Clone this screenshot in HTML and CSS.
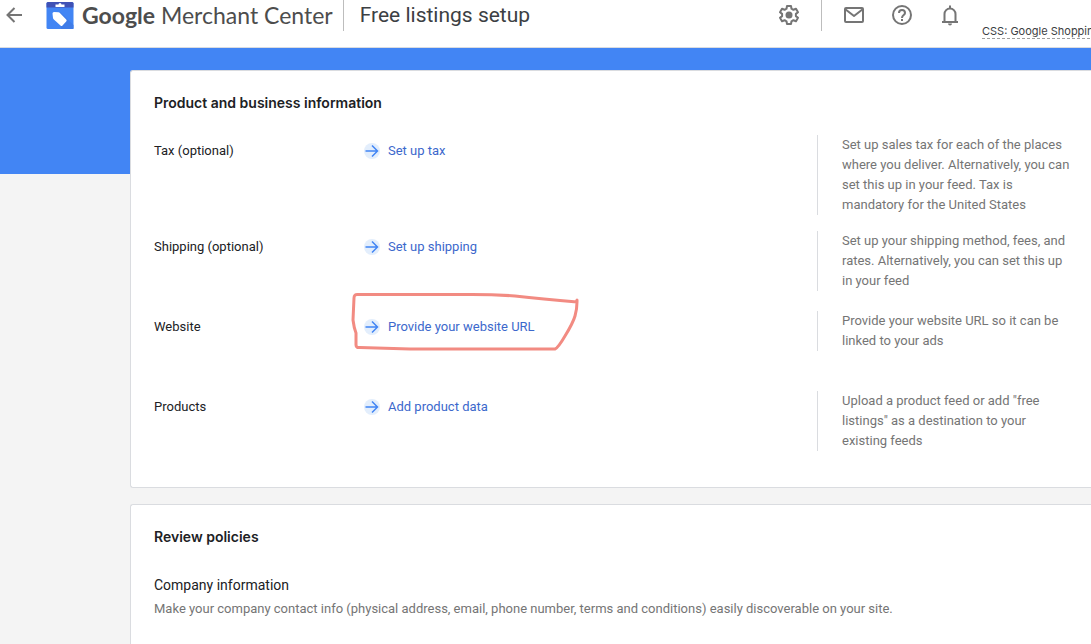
FILE: index.html
```html
<!DOCTYPE html>
<html lang="en">
<head>
  <meta charset="UTF-8" />
  <meta name="viewport" content="width=device-width, initial-scale=1.0" />
  <title>Free listings setup - Google Merchant Center</title>
  <link rel="stylesheet" href="styles.css">
</head>
<body>
  <header class="topbar">
    <button class="icon-btn back" type="button" aria-label="Back">
      <svg width="16" height="16" viewBox="0 0 16 16" fill="none" stroke="#757575" stroke-width="2"><path d="M16 8H2M8.500 1L1.500 8l7 7" /></svg>
    </button>
    <a class="brand" href="#">
      <svg width="28" height="28" viewBox="0 0 28 28">
        <rect x="0.500" y="1" width="27" height="27" rx="1.500" fill="#4285f4" />
        <path d="M14 11l13.500 13V28H15z" fill="#3f7ce8" />
        <path d="M0.500 6.500V2.500Q0.500 1 2 1h24q1.500 0 1.500 1.500v4z" fill="#3f51b5" />
        <path d="M9.500 3.500h3q0-1.500 1.500-1.500t1.500 1.500h3V6h-9z" fill="#fff" />
        <path d="M6.500 12.500q0-1.500 1.500-1.500l4.500.3q.800 0 1.400.700l6.300 6.500q1 1 0 2l-3.700 3.900q-1 1-2 0L7.600 18.200Q7 17.600 7 17z" fill="#fff" />
      </svg>
      <span class="brand-name"><b>Google</b> Merchant Center</span>
    </a>
    <h1 class="page-title">Free listings setup</h1>
    <div class="tools">
      <button class="icon-btn" type="button" aria-label="Settings">
        <svg width="24" height="24" viewBox="0 0 24 24" fill="none" stroke="#757575" stroke-width="2" stroke-linejoin="round">
          <path d="M10 3h4l.5 2.700 1.900 1.100 2.600-1 2 3.400-2.100 1.700v2.200l2.100 1.700-2 3.400-2.600-1-1.900 1.100L14 21h-4l-.5-2.700-1.900-1.100-2.600 1-2-3.400 2.100-1.700v-2.200L3 9.200l2-3.400 2.600 1 1.900-1.100z" />
          <circle cx="12" cy="12" r="3.500" fill="#757575" stroke="none" />
        </svg>
      </button>
      <span class="divider"></span>
      <button class="icon-btn" type="button" aria-label="Messages">
        <svg width="24" height="24" viewBox="0 0 24 24" fill="none" stroke="#757575" stroke-width="2" stroke-linejoin="round"><rect x="3" y="5" width="18" height="14" rx="1" /><path d="M3 6l9 7 9-7" /></svg>
      </button>
      <button class="icon-btn" type="button" aria-label="Help">
        <svg width="24" height="24" viewBox="0 0 24 24" fill="none" stroke="#757575" stroke-width="2"><circle cx="12" cy="12" r="9" /><path d="M9 10a3 3 0 0 1 6 0c0 2-3 2.200-3 5" /><path d="M12 16v2" /></svg>
      </button>
      <button class="icon-btn" type="button" aria-label="Notifications">
        <svg width="24" height="24" viewBox="0 0 24 24" fill="none" stroke="#757575" stroke-width="2"><path d="M4 19h16M6.500 18v-7a5.500 5.500 0 0 1 11 0v7" /><path d="M12 2.500V6" /><path d="M10 20.500h4a2 2 0 0 1-4 0z" fill="#757575" stroke="none" /></svg>
      </button>
    </div>
    <div class="account"><a href="#">CSS: Google Shopping</a></div>
  </header>

  <main class="content">
    <section class="card setup">
      <h2>Product and business information</h2>
      <div class="row">
        <span class="label">Tax (optional)</span>
        <a class="action" href="#">
          <svg class="arrow" viewBox="0 0 16 16"><circle cx="8" cy="8" r="8" /><path d="M1.500 8h12M8 2.500L13.500 8 8 13.500" /></svg>
          Set up tax
        </a>
        <p class="help">Set up sales tax for each of the places where you deliver. Alternatively, you can set this up in your feed. Tax is mandatory for the United States</p>
      </div>
      <div class="row">
        <span class="label">Shipping (optional)</span>
        <a class="action" href="#">
          <svg class="arrow" viewBox="0 0 16 16"><circle cx="8" cy="8" r="8" /><path d="M1.500 8h12M8 2.500L13.500 8 8 13.500" /></svg>
          Set up shipping
        </a>
        <p class="help">Set up your shipping method, fees, and rates. Alternatively, you can set this up in your feed</p>
      </div>
      <div class="row">
        <span class="label">Website</span>
        <a class="action" href="#">
          <svg class="arrow" viewBox="0 0 16 16"><circle cx="8" cy="8" r="8" /><path d="M1.500 8h12M8 2.500L13.500 8 8 13.500" /></svg>
          Provide your website URL
          <svg class="marker" width="232" height="60" viewBox="0 0 232 60"><path d="M227 8v2Q192 7 165 4 140 2 110 2.500H8Q4 2 4 6L3 28q1 8 3 13v12q0 3 4 2.500L60 57h145q3-1 10-13 8-13 10-20 2-7 2-14" /></svg>
        </a>
        <p class="help">Provide your website URL so it can be linked to your ads</p>
      </div>
      <div class="row">
        <span class="label">Products</span>
        <a class="action" href="#">
          <svg class="arrow" viewBox="0 0 16 16"><circle cx="8" cy="8" r="8" /><path d="M1.500 8h12M8 2.500L13.500 8 8 13.500" /></svg>
          Add product data
        </a>
        <p class="help">Upload a product feed or add "free listings" as a destination to your existing feeds</p>
      </div>
    </section>

    <section class="card policies">
      <h2>Review policies</h2>
      <h3>Company information</h3>
      <p>Make your company contact info (physical address, email, phone number, terms and conditions) easily discoverable on your site.</p>
    </section>
  </main>
</body>
</html>
```
FILE: styles.css
```css
* {
  box-sizing: border-box;
  margin: 0;
  padding: 0;
}

body {
  font-family: Roboto, Arial, sans-serif;
  font-size: 13px;
  line-height: 20px;
  color: #202124;
  background-color: #f4f4f4;
  min-height: 100vh;
  overflow: hidden;
}

a {
  text-decoration: none;
}

.topbar {
  display: flex;
  align-items: center;
  height: 48px;
  padding-bottom: 18px;
  background-color: #fff;
  border-bottom: 1px solid #dadce0;
}

.icon-btn {
  display: flex;
  align-items: center;
  justify-content: center;
  width: 48px;
  height: 24px;
  background: none;
  border: none;
  cursor: pointer;
}

.back {
  width: 28px;
}

.brand {
  display: flex;
  align-items: center;
  gap: 8px;
  margin-left: 18px;
  color: #4d4d4d;
}

.brand-name {
  font-family: Lato, sans-serif;
  font-size: 23px;
  line-height: 28px;
  white-space: nowrap;
}

.page-title {
  margin-left: 10px;
  padding-left: 16px;
  border-left: 1px solid #bdbdbd;
  font-size: 21px;
  font-weight: 400;
  line-height: 32px;
  color: #3c4043;
  white-space: nowrap;
}

.tools {
  display: flex;
  align-items: center;
  margin-left: auto;
}

.divider {
  width: 1px;
  height: 32px;
  margin: 0 8px;
  background-color: #bdbdbd;
}

.account {
  flex: 0 0 117px;
  min-width: 0;
  padding: 34px 0 0 8px;
  font-family: Inter, sans-serif;
  font-size: 11px;
  line-height: 14px;
  white-space: nowrap;
}

.account a {
  display: inline-block;
  color: #3c4043;
  border-bottom: 1px dashed #9e9e9e;
}

.content {
  display: flex;
  flex-direction: column;
  gap: 16px;
  padding: 22px 0 24px 130px;
  background: linear-gradient(#4285f4, #4285f4) 0 0 / 100% 126px no-repeat;
}

.card {
  padding: 20px 18px 32px 23px;
  background-color: #fff;
  border: 1px solid #dadce0;
  border-right: none;
  border-radius: 3px 0 0 3px;
}

.card h2 {
  font-family: Inter, sans-serif;
  font-size: 14px;
  font-weight: 600;
  line-height: 24px;
  margin-bottom: 20px;
}

.row {
  display: grid;
  grid-template-columns: 210px 1fr 256px;
  align-items: start;
  min-height: 64px;
}

.row + .row {
  margin-top: 16px;
}

.label,
.action {
  margin-top: 6px;
}

.action {
  display: flex;
  align-items: center;
  gap: 8px;
  position: relative;
  justify-self: start;
  color: #3c68cc;
}

.arrow {
  width: 16px;
  height: 16px;
}

.arrow circle {
  fill: #e3eefc;
}

.arrow path {
  fill: none;
  stroke: #4285f4;
  stroke-width: 1.5;
}

/* hand-drawn highlight round the link */
.marker {
  position: absolute;
  top: -25px;
  left: -14px;
  fill: none;
  stroke: #f28b82;
  stroke-width: 3;
  stroke-linecap: round;
  stroke-linejoin: round;
  pointer-events: none;
}

.help {
  padding-left: 24px;
  border-left: 1px solid #dadce0;
  color: #757575;
}

.policies h3 {
  font-size: 14px;
  font-weight: 400;
  line-height: 24px;
  margin: 24px 0 2px;
}

.policies p {
  color: #757575;
}
```
